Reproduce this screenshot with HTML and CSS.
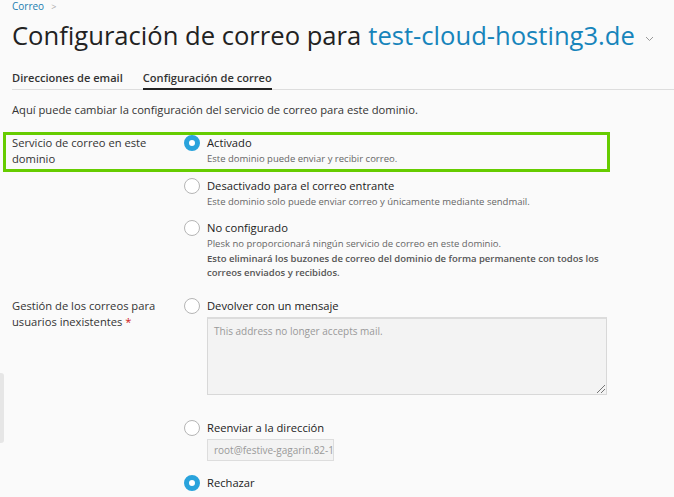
FILE: index.html
```html
<!DOCTYPE html>
<html lang="es">
<head>
<meta charset="utf-8">
<title>Configuración de correo</title>
<link rel="stylesheet" href="styles.css">
</head>
<body>
<div class="page">
  <div class="crumbs"><a class="crumb" href="#">Correo</a><span class="sep">&gt;</span></div>
  <h1 class="title">Configuración de correo para <span class="domain">test-cloud-hosting3.de</span><svg class="chev" width="9" height="6" viewBox="0 0 9 6"><path d="M1 1l3.5 3.5L8 1" fill="none" stroke="#999" stroke-width="1"/></svg></h1>
  <div class="tabs">
    <span class="tab">Direcciones de email</span>
    <span class="tab active">Configuración de correo</span>
  </div>
  <p class="intro">Aquí puede cambiar la configuración del servicio de correo para este dominio.</p>
  <div class="form">
    <div class="highlight"></div>
    <div class="row">
      <div class="label">Servicio de correo en este dominio</div>
      <div class="field">
        <div class="opt"><span class="radio checked"></span><div class="opt-body"><div class="opt-title">Activado</div><div class="hint">Este dominio puede enviar y recibir correo.</div></div></div>
        <div class="opt"><span class="radio"></span><div class="opt-body"><div class="opt-title">Desactivado para el correo entrante</div><div class="hint">Este dominio solo puede enviar correo y únicamente mediante sendmail.</div></div></div>
        <div class="opt"><span class="radio"></span><div class="opt-body"><div class="opt-title">No configurado</div><div class="hint">Plesk no proporcionará ningún servicio de correo en este dominio.<br><b>Esto eliminará los buzones de correo del dominio de forma permanente con todos los correos enviados y recibidos.</b></div></div></div>
      </div>
    </div>
    <div class="row row2">
      <div class="label">Gestión de los correos para usuarios inexistentes&nbsp;<span class="req">*</span></div>
      <div class="field">
        <div class="opt"><span class="radio"></span><div class="opt-body"><div class="opt-title">Devolver con un mensaje</div><div class="textarea">This address no longer accepts mail.<span class="grip"></span></div></div></div>
        <div class="opt opt-fwd"><span class="radio"></span><div class="opt-body"><div class="opt-title">Reenviar a la dirección</div><div class="input">root@festive-gagarin.82-1</div></div></div>
        <div class="opt opt-rej"><span class="radio checked"></span><div class="opt-body"><div class="opt-title">Rechazar</div></div></div>
      </div>
    </div>
  </div>
  <div class="side-tab"></div>
</div>
</body>
</html>
```
FILE: styles.css
```css
html, body {
  margin: 0;
  padding: 0;
}
body {
  background: #fafafa;
  font-family: "Open Sans", "DejaVu Sans", sans-serif;
  color: #222;
  width: 674px;
  height: 497px;
  overflow: hidden;
}
.page {
  position: relative;
  padding: 0 0 0 12px;
}
.crumbs {
  height: 13px;
  font-size: 10px;
  line-height: 13px;
  display: flex;
  gap: 7px;
}
.crumb {
  color: #1a7db0;
  text-decoration: none;
}
.sep {
  color: #aaa;
  font-size: 9px;
}
.title {
  margin: 5px 0 0;
  font-size: 25.6px;
  font-weight: 400;
  line-height: 36px;
  color: #222;
  white-space: nowrap;
  display: flex;
  align-items: center;
}
.domain {
  color: #1684bb;
  margin-left: 7px;
}
.chev {
  margin-left: 10px;
  margin-top: 5px;
}
.tabs {
  margin-top: 16px;
  display: flex;
  gap: 20px;
  border-bottom: 1px solid #ddd;
  font-size: 11.1px;
  font-weight: 600;
  color: #333;
}
.tab {
  padding-bottom: 2px;
  line-height: 16px;
}
.tab.active {
  border-bottom: 2px solid #222;
  margin-bottom: -1px;
}
.intro {
  margin: 12px 0 0;
  font-size: 11.2px;
  line-height: 16px;
  color: #333;
}
.form {
  position: relative;
  margin-top: 17px;
  font-size: 11.2px;
  color: #333;
}
.highlight {
  position: absolute;
  left: -9px;
  top: -3px;
  width: 601px;
  height: 34px;
  border: 3px solid #66cc00;
}
.row {
  display: grid;
  grid-template-columns: 172px 1fr;
}
.row2 {
  margin-top: 17px;
}
.label {
  line-height: 16px;
  padding-right: 20px;
}
.req {
  color: #d02020;
}
.field {
  display: flex;
  flex-direction: column;
  gap: 11px;
}
.opt {
  display: flex;
  gap: 7px;
}
.opt-body {
  width: 400px;
}
.opt-fwd {
  margin-top: 14px;
}
.opt-rej {
  margin-top: 3px;
}
.radio {
  flex: none;
  width: 14px;
  height: 14px;
  border: 1px solid #b5b5b5;
  border-radius: 50%;
  background: #fff;
  box-sizing: content-box;
}
.radio.checked {
  width: 6px;
  height: 6px;
  border: 5px solid #29a3dc;
}
.opt-title {
  line-height: 16px;
  color: #222;
}
.hint {
  margin-top: 1px;
  font-size: 9.5px;
  line-height: 14.5px;
  color: #666;
}
.hint b {
  font-weight: 600;
  color: #555;
}
.textarea {
  position: relative;
  margin-top: 3px;
  height: 65px;
  padding: 5px 6px;
  background: #f3f3f3;
  border: 1px solid #d8d8d8;
  border-top: 2px solid #dcdcdc;
  font-size: 10px;
  color: #999;
}
.grip {
  position: absolute;
  right: 1px;
  bottom: 1px;
  width: 8px;
  height: 8px;
  background: linear-gradient(135deg, transparent 45%, #777 45%, #777 52%, transparent 52%, transparent 70%, #777 70%, #777 77%, transparent 77%);
}
.input {
  margin-top: 3px;
  width: 113px;
  height: 20px;
  padding: 0 6px;
  line-height: 20px;
  background: #f3f3f3;
  border: 1px solid #ddd;
  font-size: 10px;
  color: #999;
  white-space: nowrap;
  overflow: hidden;
}
.side-tab {
  position: absolute;
  left: 0;
  top: 373px;
  width: 4px;
  height: 70px;
  background: #e6e6e6;
  border-radius: 0 3px 3px 0;
}
```
